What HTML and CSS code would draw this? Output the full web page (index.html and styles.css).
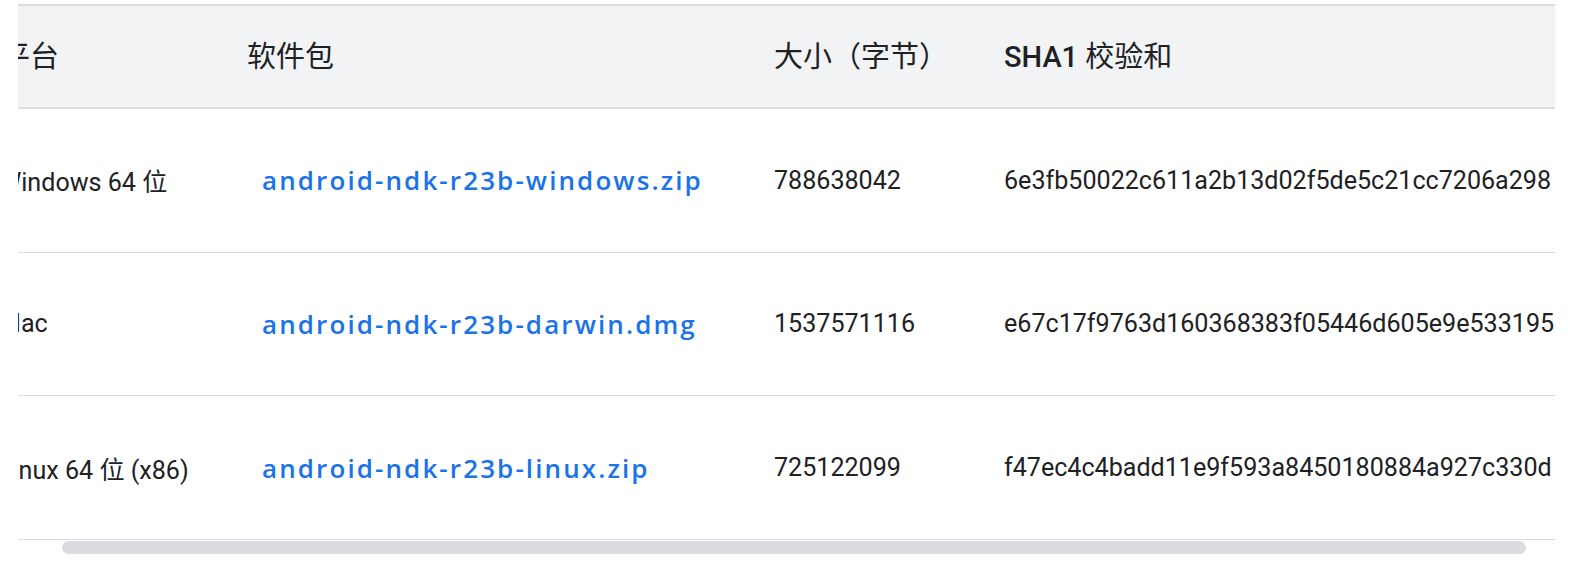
FILE: index.html
```html
<!DOCTYPE html>
<html lang="zh-CN">
<head>
<meta charset="utf-8">
<title>NDK 下载</title>
<link rel="stylesheet" href="styles.css">
</head>
<body>
<div class="table-wrap">
  <div class="scroller" id="scroller">
    <div class="downloads">
      <div class="row head">
        <div class="cell">平台</div>
        <div class="cell">软件包</div>
        <div class="cell">大小（字节）</div>
        <div class="cell"><span class="latin">SHA1</span> 校验和</div>
      </div>
      <div class="row">
        <div class="cell">Windows 64 位</div>
        <div class="cell"><a class="pkg" href="#">android-ndk-r23b-windows.zip</a></div>
        <div class="cell">788638042</div>
        <div class="cell">6e3fb50022c611a2b13d02f5de5c21cc7206a298</div>
      </div>
      <div class="row">
        <div class="cell">Mac</div>
        <div class="cell"><a class="pkg" href="#">android-ndk-r23b-darwin.dmg</a></div>
        <div class="cell">1537571116</div>
        <div class="cell">e67c17f9763d160368383f05446d605e9e533195</div>
      </div>
      <div class="row">
        <div class="cell">Linux 64 位 (x86)</div>
        <div class="cell"><a class="pkg" href="#">android-ndk-r23b-linux.zip</a></div>
        <div class="cell">725122099</div>
        <div class="cell">f47ec4c4badd11e9f593a8450180884a927c330d</div>
      </div>
    </div>
  </div>
  <div class="hscroll"><div class="hscroll-thumb"></div></div>
</div>
<script src="script.js"></script>
</body>
</html>
```
FILE: styles.css
```css
html, body {
  margin: 0;
  padding: 0;
  background: #ffffff;
}

body {
  font-family: Roboto, "Noto Sans CJK SC", sans-serif;
  color: #202124;
  font-size: 25.1px;
}

.table-wrap {
  margin: 4px 0 0 18px;
  width: 1537px;
}

.scroller {
  width: 1537px;
  overflow: hidden;
}

.hscroll {
  height: 15px;
  padding-top: 1px;
  box-sizing: border-box;
}

.hscroll-thumb {
  margin-left: 44px;
  width: 1464px;
  height: 13px;
  background: #dadce0;
  border-radius: 7px;
}

.downloads {
  width: 1614px;
}

.row {
  display: grid;
  grid-template-columns: 248px 527px 230px 609px;
  align-items: center;
  height: 142.67px;
  border-bottom: 1px solid #dadce0;
}

.row.head {
  height: 95px;
  padding-bottom: 6px;
  background: #f1f3f4;
  border-top: 2px solid #dadce0;
  border-bottom: 2px solid #dadce0;
  font-size: 29px;
}

.cell {
  padding-left: 27px;
  white-space: nowrap;
}

.head .cell:first-child {
  padding-left: 29px;
}

.latin {
  font-weight: 500;
}

.pkg {
  display: inline-block;
  padding-left: 15px;
  font-family: "Open Sans", sans-serif;
  font-size: 26px;
  font-weight: 600;
  letter-spacing: 2.1px;
  color: #1a73e8;
  text-decoration: none;
}
```
FILE: script.js
```js
document.getElementById('scroller').scrollLeft = 46;
```
